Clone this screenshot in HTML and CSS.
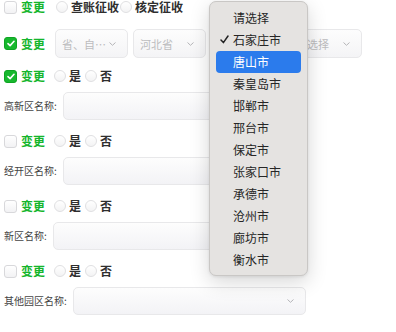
FILE: index.html
```html
<!DOCTYPE html>
<html lang="zh">
<head>
<meta charset="utf-8">
<link rel="stylesheet" href="styles.css">
</head>
<body>
<div class="page">
  <div class="row r1">
    <span class="cb"></span><span class="chg">变更</span>
    <span class="rd first"></span><span class="opt">查账征收</span>
    <span class="rd second"></span><span class="opt">核定征收</span>
  </div>
  <div class="row r2">
    <span class="cb on"><svg width="8" height="7" viewBox="0 0 8 7"><polyline points="1,3.6 3.1,5.6 7,1.3" fill="none" stroke="#fff" stroke-width="1.6" stroke-linecap="round" stroke-linejoin="round"/></svg></span><span class="chg">变更</span>
    <div class="sels">
      <div class="sel">省、自…<svg class="chev" width="7" height="4" viewBox="0 0 7 4"><polyline points="0.5,0.5 3.5,3.3 6.5,0.5" fill="none" stroke="#b5b5b8" stroke-width="1"/></svg></div>
      <div class="sel">河北省<svg class="chev" width="7" height="4" viewBox="0 0 7 4"><polyline points="0.5,0.5 3.5,3.3 6.5,0.5" fill="none" stroke="#b5b5b8" stroke-width="1"/></svg></div>
      <div class="sel"><span></span><svg class="chev" width="7" height="4" viewBox="0 0 7 4"><polyline points="0.5,0.5 3.5,3.3 6.5,0.5" fill="none" stroke="#b5b5b8" stroke-width="1"/></svg></div>
      <div class="sel">请选择<svg class="chev" width="7" height="4" viewBox="0 0 7 4"><polyline points="0.5,0.5 3.5,3.3 6.5,0.5" fill="none" stroke="#b5b5b8" stroke-width="1"/></svg></div>
    </div>
  </div>

  <div class="row check">
    <span class="cb on"><svg width="8" height="7" viewBox="0 0 8 7"><polyline points="1,3.6 3.1,5.6 7,1.3" fill="none" stroke="#fff" stroke-width="1.6" stroke-linecap="round" stroke-linejoin="round"/></svg></span><span class="chg">变更</span>
    <span class="rd first"></span><span class="opt">是</span>
    <span class="rd second"></span><span class="opt">否</span>
  </div>
  <div class="row field">
    <span class="label">高新区名称:</span>
    <div class="input"><svg class="chev" width="7" height="4" viewBox="0 0 7 4"><polyline points="0.5,0.5 3.5,3.3 6.5,0.5" fill="none" stroke="#b5b5b8" stroke-width="1"/></svg></div>
  </div>

  <div class="row check">
    <span class="cb"></span><span class="chg">变更</span>
    <span class="rd first"></span><span class="opt">是</span>
    <span class="rd second"></span><span class="opt">否</span>
  </div>
  <div class="row field">
    <span class="label">经开区名称:</span>
    <div class="input"><svg class="chev" width="7" height="4" viewBox="0 0 7 4"><polyline points="0.5,0.5 3.5,3.3 6.5,0.5" fill="none" stroke="#b5b5b8" stroke-width="1"/></svg></div>
  </div>

  <div class="row check">
    <span class="cb"></span><span class="chg">变更</span>
    <span class="rd first"></span><span class="opt">是</span>
    <span class="rd second"></span><span class="opt">否</span>
  </div>
  <div class="row field">
    <span class="label">新区名称:</span>
    <div class="input"><svg class="chev" width="7" height="4" viewBox="0 0 7 4"><polyline points="0.5,0.5 3.5,3.3 6.5,0.5" fill="none" stroke="#b5b5b8" stroke-width="1"/></svg></div>
  </div>

  <div class="row check">
    <span class="cb"></span><span class="chg">变更</span>
    <span class="rd first"></span><span class="opt">是</span>
    <span class="rd second"></span><span class="opt">否</span>
  </div>
  <div class="row field">
    <span class="label">其他园区名称:</span>
    <div class="input"><svg class="chev" width="7" height="4" viewBox="0 0 7 4"><polyline points="0.5,0.5 3.5,3.3 6.5,0.5" fill="none" stroke="#b5b5b8" stroke-width="1"/></svg></div>
  </div>

  <ul class="menu">
    <li class="mi">请选择</li>
    <li class="mi"><svg class="tick" width="9" height="9" viewBox="0 0 9 9"><polyline points="1,5 3.4,7.6 8,1" fill="none" stroke="#222" stroke-width="1.5" stroke-linecap="round" stroke-linejoin="round"/></svg>石家庄市</li>
    <li class="mi hl">唐山市</li>
    <li class="mi">秦皇岛市</li>
    <li class="mi">邯郸市</li>
    <li class="mi">邢台市</li>
    <li class="mi">保定市</li>
    <li class="mi">张家口市</li>
    <li class="mi">承德市</li>
    <li class="mi">沧州市</li>
    <li class="mi">廊坊市</li>
    <li class="mi">衡水市</li>
  </ul>
</div>
</body>
</html>
```

FILE: styles.css
```css
html, body {
  margin: 0;
  padding: 0;
  background: #fff;
}
body {
  font-family: "Noto Sans CJK SC", "Noto Sans", sans-serif;
  color: #333;
}
.page {
  position: relative;
  height: 332px;
  overflow: hidden;
  padding-left: 4px;
}
.row {
  display: flex;
  align-items: center;
}
.r1 {
  height: 14px;
  margin-bottom: 15px;
}
.r2 {
  height: 29px;
  margin-bottom: 8px;
}
.check {
  height: 20px;
  margin-bottom: 6px;
}
.field {
  height: 28px;
  margin-bottom: 11px;
}
.cb {
  width: 13px;
  height: 13px;
  box-sizing: border-box;
  border: 1px solid #d8d8db;
  border-radius: 3px;
  background: linear-gradient(#fff, #f2f2f4);
  flex: none;
}
.cb.on {
  background: #17b82e;
  border-color: #0fa523;
  display: flex;
  align-items: center;
  justify-content: center;
}
.cb.on svg {
  display: block;
}
.chg {
  margin-left: 4px;
  font-size: 12px;
  line-height: 1;
  font-weight: 700;
  color: #14b52c;
}
.rd {
  width: 12px;
  height: 12px;
  box-sizing: border-box;
  border: 1px solid #e0e0e2;
  border-radius: 50%;
  background: linear-gradient(#fff, #f3f3f4);
  flex: none;
}
.r1 .rd.first { margin-left: 11px; }
.r1 .rd.second { margin-left: 1px; }
.check .rd.first { margin-left: 9px; }
.check .rd.second { margin-left: 4px; }
.opt {
  margin-left: 3px;
  font-size: 12px;
  line-height: 1;
  font-weight: 700;
  color: #2e2e2e;
}
.sels {
  display: flex;
  gap: 5px;
  margin-left: 10px;
  height: 29px;
}
.sel {
  width: 73px;
  height: 29px;
  box-sizing: border-box;
  border: 1px solid #e8e8ea;
  border-radius: 5px;
  background: linear-gradient(#fdfdfd, #f4f4f6);
  display: flex;
  align-items: center;
  justify-content: space-between;
  padding: 0 11px 0 6px;
  font-size: 11px;
  color: #bcbcbe;
}
.chev {
  display: block;
  flex: none;
}
.label {
  font-size: 10px;
  color: #444;
  margin-right: 6px;
  line-height: 1;
}
.input {
  width: 233px;
  height: 28px;
  box-sizing: border-box;
  border: 1px solid #e8e8ea;
  border-radius: 5px;
  background: linear-gradient(#fdfdfd, #f3f3f6);
  display: flex;
  align-items: center;
  justify-content: flex-end;
  padding-right: 11px;
}
.menu {
  position: absolute;
  left: 209px;
  top: 1px;
  width: 99px;
  box-sizing: border-box;
  margin: 0;
  padding: 5px 6px 4px;
  list-style: none;
  background: #e5e3e1;
  border: 1px solid #c9c7c5;
  border-radius: 7px;
  box-shadow: 0 6px 20px rgba(0, 0, 0, 0.16), 0 1px 3px rgba(0, 0, 0, 0.08);
}
.mi {
  position: relative;
  height: 22px;
  line-height: 22px;
  padding-left: 17px;
  font-size: 12px;
  color: #262626;
  border-radius: 4px;
}
.mi.hl {
  background: #2b7bec;
  color: #fff;
}
.tick {
  position: absolute;
  left: 4px;
  top: 6px;
}
```
